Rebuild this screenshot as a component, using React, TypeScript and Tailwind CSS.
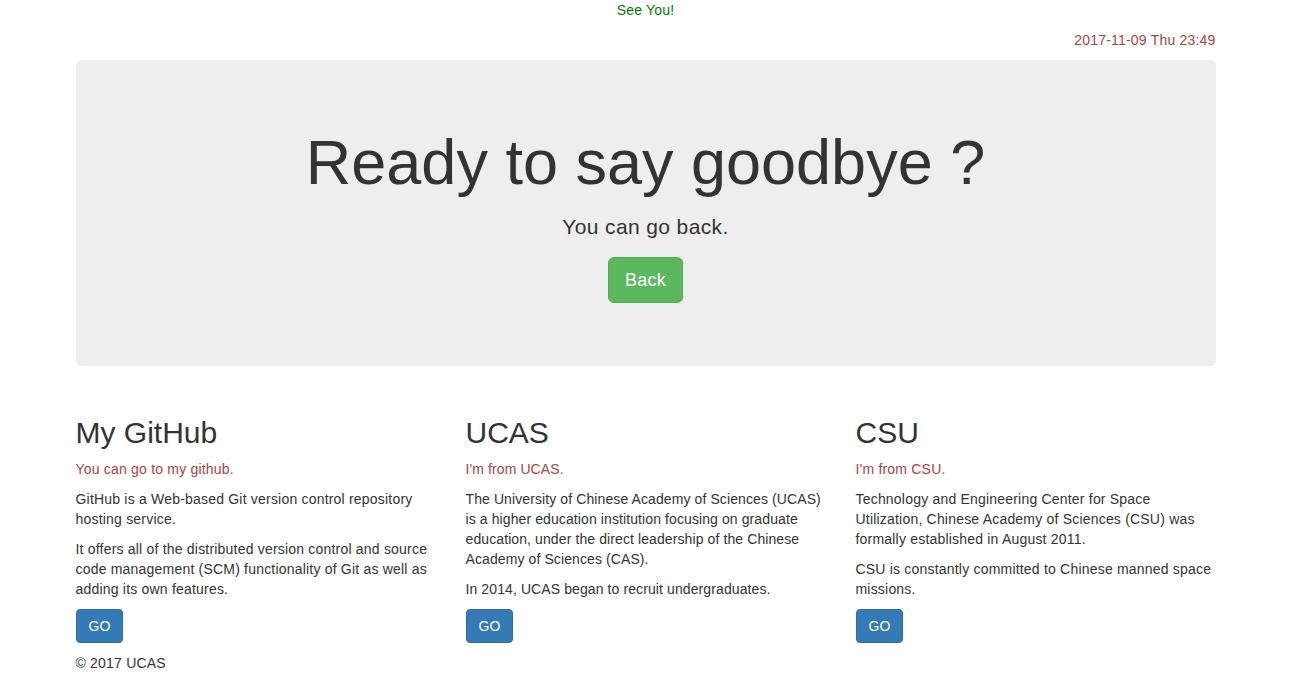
export default function App() {
  const cols = [
    {
      title: "My GitHub",
      lead: "You can go to my github.",
      track: "tracking-[0.2px]",
      paras: [
        "GitHub is a Web-based Git version control repository hosting service.",
        "It offers all of the distributed version control and source code management (SCM) functionality of Git as well as adding its own features.",
      ],
    },
    {
      title: "UCAS",
      lead: "I'm from UCAS.",
      track: "tracking-[0.1px]",
      paras: [
        "The University of Chinese Academy of Sciences (UCAS) is a higher education institution focusing on graduate education, under the direct leadership of the Chinese Academy of Sciences (CAS).",
        "In 2014, UCAS began to recruit undergraduates.",
      ],
    },
    {
      title: "CSU",
      lead: "I'm from CSU.",
      track: "tracking-[0.2px]",
      paras: [
        "Technology and Engineering Center for Space Utilization, Chinese Academy of Sciences (CSU) was formally established in August 2011.",
        "CSU is constantly committed to Chinese manned space missions.",
      ],
    },
  ];

  return (
    <div className="min-h-screen bg-white font-['Liberation_Sans',Arial,sans-serif] text-[14px] leading-[20px] tracking-[0.2px] text-[#333]">
      <p className="mb-[10px] text-center text-[#008000]">See You!</p>

      <div className="mx-auto w-[1170px] px-[15px]">
        <p className="mb-[10px] text-right text-[#a94442]">2017-11-09 Thu 23:49</p>

        {/* Jumbotron */}
        <div className="mb-[30px] rounded-[6px] bg-[#eee] px-[60px] py-[48px] text-center">
          <h1 className="mt-[20px] mb-[15px] text-[63px] leading-[1.1] font-medium tracking-normal">
            Ready to say goodbye ?
          </h1>
          <p className="mb-[15px] text-[21px] leading-[30px] tracking-[0.37px]">You can go back.</p>
          <p className="mb-[15px] text-[21px] leading-[30px]">
            <a
              href="#"
              className="inline-block rounded-[6px] border border-[#4cae4c] bg-[#5cb85c] px-[16px] py-[10px] align-middle text-[18px] leading-[24px] tracking-[0.2px] text-white"
            >
              Back
            </a>
          </p>
        </div>

        <div className="-mx-[15px] grid grid-cols-3">
          {cols.map((c) => (
            <div key={c.title} className={`px-[15px] ${c.track}`}>
              <h2 className="mt-[20px] mb-[10px] text-[30px] leading-[33px] font-medium tracking-normal">{c.title}</h2>
              <p className="mb-[10px] text-[#a94442]">{c.lead}</p>
              {c.paras.map((p) => (
                <p key={p} className="mb-[10px]">
                  {p}
                </p>
              ))}
              <p className="mb-[10px]">
                <a
                  href="#"
                  className="inline-block rounded-[4px] border border-[#2e6da4] bg-[#337ab7] px-[12px] py-[6px] align-middle text-[14px] leading-[20px] tracking-normal text-white"
                >
                  GO
                </a>
              </p>
            </div>
          ))}
        </div>

        <footer>
          <p className="mb-[10px]">© 2017 UCAS</p>
        </footer>
      </div>
    </div>
  );
}
